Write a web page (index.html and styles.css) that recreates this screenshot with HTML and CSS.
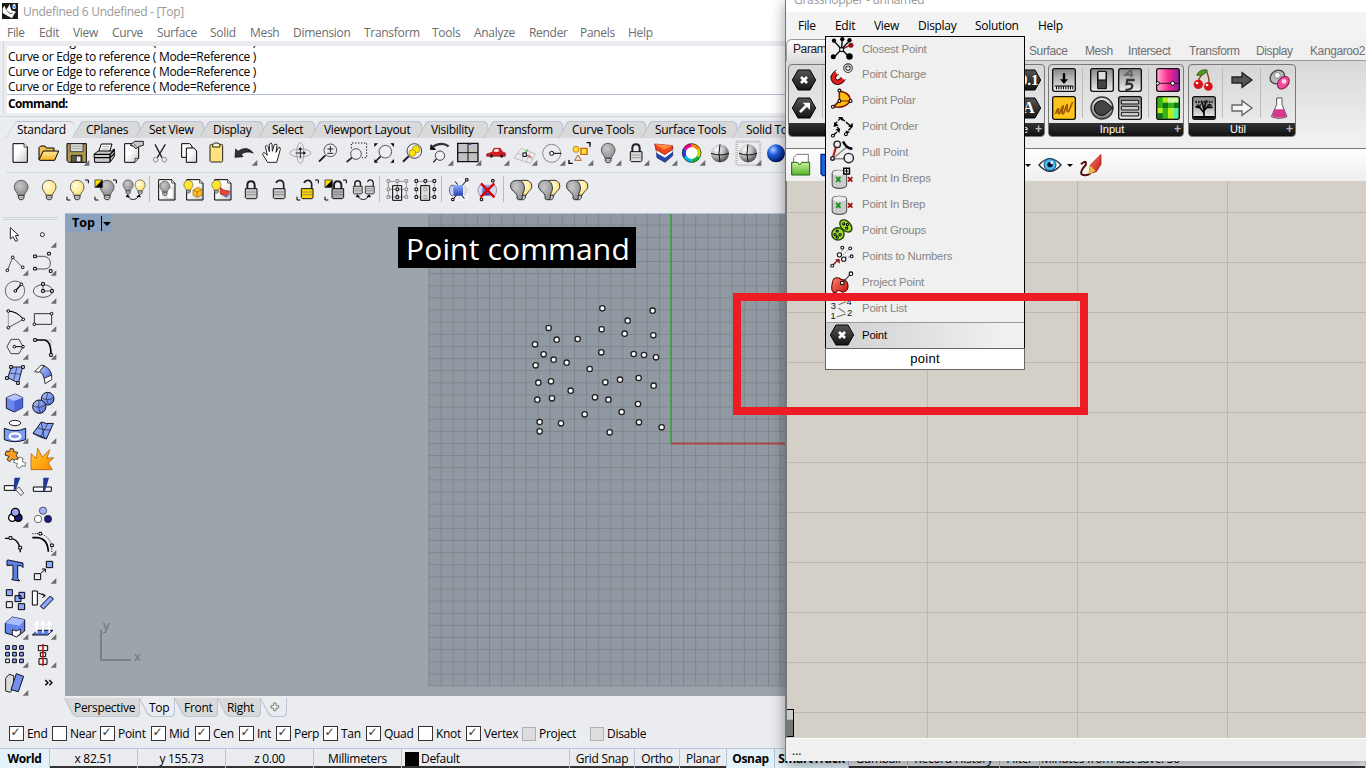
FILE: index.html
```html
<!DOCTYPE html>
<html lang="en">
<head>
<meta charset="utf-8">
<title>Undefined 6 Undefined - [Top]</title>
<link rel="stylesheet" href="styles.css">
</head>
<body>
<svg class="defs" width="0" height="0">
  <defs>
    <linearGradient id="gBlue" x1="0" y1="0" x2="1" y2="1"><stop offset="0" stop-color="#b3c6ff"/><stop offset="1" stop-color="#4a68dc"/></linearGradient>
    <linearGradient id="gCyl" x1="0" y1="0" x2="0" y2="1"><stop offset="0" stop-color="#8fb0ff"/><stop offset="1" stop-color="#2440b0"/></linearGradient>
    <linearGradient id="gGray" x1="0" y1="0" x2="0" y2="1"><stop offset="0" stop-color="#e4e4e4"/><stop offset="1" stop-color="#777"/></linearGradient>
    <linearGradient id="gBtn" x1="0" y1="0" x2="0" y2="1"><stop offset="0" stop-color="#888"/><stop offset="1" stop-color="#eee"/></linearGradient>
    <linearGradient id="gPage" x1="0" y1="0" x2="1" y2="1"><stop offset=".4" stop-color="#fff"/><stop offset="1" stop-color="#c8c8c8"/></linearGradient>
    <linearGradient id="gFold" x1="0" y1="0" x2="0" y2="1"><stop offset="0" stop-color="#ffe9a0"/><stop offset="1" stop-color="#f5b223"/></linearGradient>
    <linearGradient id="gBurst" x1="0" y1="0" x2="1" y2="1"><stop offset="0" stop-color="#ffcc30"/><stop offset="1" stop-color="#ff8a00"/></linearGradient>
    <linearGradient id="gPink" x1="0" y1="0" x2="1" y2="0"><stop offset="0" stop-color="#ffb0d0"/><stop offset=".5" stop-color="#ff2a90"/><stop offset="1" stop-color="#8a1ea0"/></linearGradient>
    <linearGradient id="gHex" x1="0" y1="0" x2="0" y2="1"><stop offset="0" stop-color="#555"/><stop offset="1" stop-color="#151515"/></linearGradient>
    <radialGradient id="gBall" cx=".35" cy=".3" r=".75"><stop offset="0" stop-color="#fff"/><stop offset=".5" stop-color="#bbb"/><stop offset="1" stop-color="#444"/></radialGradient>
    <radialGradient id="gBallB" cx=".35" cy=".3" r=".75"><stop offset="0" stop-color="#b8d4ff"/><stop offset=".4" stop-color="#1c5fe0"/><stop offset="1" stop-color="#001050"/></radialGradient>
    <radialGradient id="gY" cx=".35" cy=".35" r=".7"><stop offset="0" stop-color="#fffde0"/><stop offset="1" stop-color="#ffdf70"/></radialGradient>
    <radialGradient id="gG" cx=".4" cy=".35" r=".7"><stop offset="0" stop-color="#c8c8c8"/><stop offset="1" stop-color="#8c8c8c"/></radialGradient>
    <linearGradient id="gRed" x1="0" y1="0" x2="1" y2="1"><stop offset="0" stop-color="#ff8a70"/><stop offset="1" stop-color="#c01010"/></linearGradient>
    <linearGradient id="gGreen" x1="0" y1="0" x2="0" y2="1"><stop offset="0" stop-color="#c8f09a"/><stop offset="1" stop-color="#58b428"/></linearGradient>
    <pattern id="grid" width="12.13" height="12.13" patternUnits="userSpaceOnUse"><path d="M0 .5H12.13M.5 0V12.13" stroke="#7e858d" fill="none"/></pattern>
  </defs>
  <symbol id="tri" viewBox="0 0 84 84"><path d="M82 63V80H65Z" fill="#6e6e6e"/></symbol>
  <symbol id="bulb" viewBox="0 0 84 84"><path d="M42 13C30 13 22 22 22 34C22 45 31 48 33 58H52C54 48 63 45 63 34C63 22 54 13 42 13Z" stroke="#444" stroke-width="2.5"/><path d="M34 58H51V66L47 71H38L34 66Z" fill="#ccc" stroke="#333" stroke-width="3"/><path d="M34 64H51" stroke="#777" stroke-width="2"/></symbol>
  <symbol id="brk" viewBox="0 0 84 84"><path d="M66 12H76V22M12 62V72H22" fill="none" stroke="#000" stroke-width="3"/></symbol>
  <symbol id="sq" viewBox="0 0 84 84"><path d="M11 11H35V35H11Z" fill="#000"/><path d="M13 13H33L13 33Z" fill="#ffe000"/></symbol>
  <symbol id="lock" viewBox="0 0 84 84"><path d="M31 40V28Q31 16 42 16Q53 16 53 28V40" fill="none" stroke="#222" stroke-width="6"/><path d="M25 38H60V65L56 68H28L25 65Z" stroke="#111" stroke-width="3"/><path d="M28 48H57M28 56H57" stroke="#777" stroke-width="2"/></symbol>
  <symbol id="ulock" viewBox="0 0 84 84"><path d="M56 40V24Q54 13 45 13Q37 13 33 21" fill="none" stroke="#222" stroke-width="5"/><path d="M25 38H60V65L56 68H28L25 65Z" stroke="#111" stroke-width="3"/><path d="M28 48H57M28 56H57" stroke="#666" stroke-width="2"/></symbol>
  <symbol id="page" viewBox="0 0 84 84"><path d="M17 11H56L66 21V72H17Z" fill="url(#gPage)" stroke="#000" stroke-width="3"/><path d="M56 11V21H66" fill="#fff" stroke="#000" stroke-width="2"/></symbol>
  <symbol id="duo" viewBox="0 0 84 84"><path d="M42 13H60C72 16 75 24 74 34C72 45 60 48 57 58H45Z" fill="url(#gY)" stroke="#333" stroke-width="3"/><path d="M42 58H55V66L50 71H40Z" fill="#ccc" stroke="#333" stroke-width="3"/><path d="M31 13C15 13 9 22 11 34C13 45 27 48 30 58V68L34 71H43L46 66V58C48 48 54 44 52 32C50 20 44 13 31 13Z" fill="url(#gG)" stroke="#333" stroke-width="3"/></symbol>
  <symbol id="hex" viewBox="0 0 72 72"><path d="M18 6H54L71 36L54 66H18L1 36Z" fill="url(#gHex)" stroke="#000" stroke-width="3"/></symbol>
  <symbol id="btn" viewBox="0 0 72 72"><rect x="2" y="2" width="68" height="68" rx="6" fill="url(#gBtn)" stroke="#111" stroke-width="4"/></symbol>
  <symbol id="brep" viewBox="0 0 72 72"><path d="M6 20V52Q6 62 26 62Q46 62 46 52V20Q46 12 26 12Q6 12 6 20Z" fill="#ccc" stroke="#555" stroke-width="3"/><ellipse cx="26" cy="19" rx="19" ry="7" fill="#eee"/><path d="M17 30L29 44M29 30L17 44" stroke="#0a9a1a" stroke-width="5"/><path d="M50 31L62 43M62 31L50 43" stroke="#a01010" stroke-width="5"/></symbol>
</svg>

<main class="desktop">
<section class="rhino">
  <header class="titlebar">
    <svg class="app-icon" viewBox="0 0 48 48"><path d="M0 0H48V48H0Z" fill="#1a1a1a"/><path d="M2 16L8 8L12 20L20 10L22 2L28 22L42 26L36 34L30 46L12 36L2 30Z" fill="#fff"/><path d="M14 22L24 32L32 30" fill="none" stroke="#555" stroke-width="3"/><text x="31" y="17" font-size="19" font-weight="bold" fill="#fff">6</text></svg>
    <span>Undefined 6 Undefined - [Top]</span>
  </header>
  <nav class="menubar"><span>File</span><span>Edit</span><span>View</span><span>Curve</span><span>Surface</span><span>Solid</span><span>Mesh</span><span>Dimension</span><span>Transform</span><span>Tools</span><span>Analyze</span><span>Render</span><span>Panels</span><span>Help</span></nav>
  <div class="command">
    <div class="history"><p>Curve or Edge to reference ( Mode=Reference )</p><p>Curve or Edge to reference ( Mode=Reference )</p><p>Curve or Edge to reference ( Mode=Reference )</p><p>Curve or Edge to reference ( Mode=Reference )</p></div>
    <div class="prompt">Command:</div>
  </div>
  <div class="toolbars">
    <div class="tabs"><span class="tab on">Standard</span><span class="tab">CPlanes</span><span class="tab">Set View</span><span class="tab">Display</span><span class="tab">Select</span><span class="tab">Viewport Layout</span><span class="tab">Visibility</span><span class="tab">Transform</span><span class="tab">Curve Tools</span><span class="tab">Surface Tools</span><span class="tab">Solid Tools</span></div>
    <div class="icons">
      <svg viewBox="0 0 84 84"><path d="M21 14H54L64 24V70H21Z" fill="url(#gPage)" stroke="#000" stroke-width="3"/><path d="M54 14V24H64" fill="#fff" stroke="#000" stroke-width="2"/></svg>
      <svg viewBox="0 0 84 84"><path d="M15 62V26L20 21H33L37 27H60V36" fill="#f0c050" stroke="#000" stroke-width="3"/><path d="M15 62L28 36H74L62 64H18Z" fill="url(#gFold)" stroke="#000" stroke-width="3"/></svg>
      <svg viewBox="0 0 84 84"><path d="M15 14H73V70H20L15 65Z" fill="#b09a50" stroke="#000" stroke-width="3"/><path d="M25 14H63V38H25Z" fill="#ddd" stroke="#000" stroke-width="2"/><path d="M29 22H59M29 29H59" stroke="#888" stroke-width="2"/><path d="M28 49H60V70H28Z" fill="#555" stroke="#000" stroke-width="2"/><path d="M45 53H55V67H45Z" fill="#eee"/><use href="#tri"/></svg>
      <svg viewBox="0 0 84 84"><path d="M25 40L34 15H66L58 40Z" fill="#fff" stroke="#000" stroke-width="3"/><path d="M37 23H57M35 30H55" stroke="#777" stroke-width="2"/><path d="M12 46L24 36H64L73 30V52L60 70H14Z" fill="#ccc" stroke="#000" stroke-width="3"/><path d="M12 46H60L73 34M14 56H60L73 44M60 46V69" fill="none" stroke="#000" stroke-width="4"/></svg>
      <svg viewBox="0 0 84 84"><path d="M20 14H62V58L51 70H20Z" fill="url(#gPage)" stroke="#000" stroke-width="3"/><path d="M62 58H51V70" fill="#ccc" stroke="#000" stroke-width="2"/><path d="M36 19L50 7H76V19L64 22L54 29L46 22Z" fill="#ccc" stroke="#222" stroke-width="3"/><path d="M42 18L50 26M48 14L56 23" stroke="#333" stroke-width="2"/></svg>
      <svg viewBox="0 0 84 84"><path d="M27 16L48 56M58 16L34 56" stroke="#222" stroke-width="4"/><circle cx="29" cy="62" r="7" fill="none" stroke="#888" stroke-width="3"/><circle cx="55" cy="62" r="7" fill="none" stroke="#888" stroke-width="3"/></svg>
      <svg viewBox="0 0 84 84"><path d="M23 14H47L54 21V55H23Z" fill="#fff" stroke="#000" stroke-width="3"/><path d="M37 27H60L68 36V70H37Z" fill="url(#gPage)" stroke="#000" stroke-width="3"/></svg>
      <svg viewBox="0 0 84 84"><rect x="24" y="16" width="38" height="53" rx="4" fill="#ffe27c" stroke="#222" stroke-width="3"/><path d="M32 24V17L38 12H48L54 17V24Z" fill="#f5f5c0" stroke="#222" stroke-width="3"/></svg>
      <svg viewBox="0 0 84 84"><path d="M15 55L17 30L24 37Q50 18 70 42Q48 34 34 46L39 53Z" fill="#333" stroke="#000" stroke-width="2"/><use href="#tri"/></svg>
      <svg viewBox="0 0 84 84"><path d="M29 70L14 46Q14 38 22 43L28 49L22 22Q26 15 30 23L34 38V15Q39 8 42 15L43 37L49 17Q55 12 57 19L54 40L61 26Q68 23 67 31L56 70Z" fill="#fff" stroke="#222" stroke-width="3"/></svg>
      <svg viewBox="0 0 84 84"><g fill="none" stroke="#888" stroke-width="2"><ellipse cx="43" cy="42" rx="32" ry="12"/><ellipse cx="43" cy="42" rx="11" ry="31"/></g><path d="M43 30V58M29 42H56" stroke="#222" stroke-width="3"/><path d="M37 32L43 24L49 32M52 36L60 42L52 48" fill="#111"/></svg>
      <svg viewBox="0 0 84 84"><circle cx="49" cy="34" r="19" fill="#ededf2" stroke="#555" stroke-width="3"/><path d="M34 49L15 68" stroke="#222" stroke-width="6"/><path d="M40 30H58M49 21V40M40 43H58" stroke="#222" stroke-width="3"/></svg>
      <svg viewBox="0 0 84 84"><path d="M28 28V12H74V56H60" fill="none" stroke="#111" stroke-width="3" stroke-dasharray="4 5"/><circle cx="42" cy="45" r="16" fill="#ededf2" stroke="#555" stroke-width="3"/><path d="M30 56L14 69" stroke="#222" stroke-width="5"/></svg>
      <svg viewBox="0 0 84 84"><circle cx="46" cy="38" r="19" fill="#ededf2" stroke="#555" stroke-width="3"/><path d="M32 52L18 66" stroke="#222" stroke-width="5"/><path d="M13 13H24L13 24ZM61 13H72V24ZM13 60V71H24ZM72 60V71H61Z" fill="#000"/></svg>
      <svg viewBox="0 0 84 84"><circle cx="49" cy="36" r="22" fill="#ededf2" stroke="#444" stroke-width="3"/><path d="M32 52L15 68" stroke="#222" stroke-width="6"/><circle cx="54" cy="31" r="11" fill="#ffe400" stroke="#a08000" stroke-width="2"/><circle cx="43" cy="42" r="10" fill="#ffe400" stroke="#a08000" stroke-width="2"/></svg>
      <svg viewBox="0 0 84 84"><path d="M12 32L14 15L31 33Z" fill="#000"/><path d="M18 24Q48 6 68 22" fill="none" stroke="#333" stroke-width="7"/><circle cx="42" cy="50" r="14" fill="#ededf2" stroke="#444" stroke-width="3"/><path d="M31 60L22 70" stroke="#222" stroke-width="4"/><use href="#tri"/></svg>
      <svg viewBox="0 0 84 84"><path d="M11 13H72V68H11Z" fill="#c2c2c2" stroke="#111" stroke-width="4"/><path d="M11 41H72M42 13V68" stroke="#111" stroke-width="3"/><path d="M44 16H52" stroke="#3548b0" stroke-width="4"/><use href="#tri"/></svg>
      <svg viewBox="0 0 84 84"><path d="M14 45L30 40L36 28H55L61 38L70 42V52H14Z" fill="#d41c20" stroke="#a01414" stroke-width="2"/><path d="M38 31H50V38H35Z" fill="#fff"/><circle cx="28" cy="51" r="5" fill="#222"/><circle cx="59" cy="51" r="5" fill="#222"/><use href="#tri"/></svg>
      <svg viewBox="0 0 84 84"><path d="M12 57L34 28L76 44L62 73ZM22 43L69 60M48 33L34 67M62 39L48 71" fill="none" stroke="#aaa" stroke-width="2"/><path d="M45 46L65 55" stroke="#d22" stroke-width="3"/><path d="M45 46L53 32" stroke="#1a1" stroke-width="3"/><rect x="39" y="42" width="10" height="10" fill="#fff" stroke="#000" stroke-width="3"/><use href="#tri"/></svg>
      <svg viewBox="0 0 84 84"><circle cx="41" cy="43" r="27" fill="none" stroke="#888" stroke-width="3"/><path d="M41 43H70" stroke="#000" stroke-width="3"/><circle cx="41" cy="43" r="6" fill="#fff" stroke="#000" stroke-width="3"/><use href="#tri"/></svg>
      <svg viewBox="0 0 84 84"><circle cx="30" cy="31" r="9" fill="#ffe23c" stroke="#d08000" stroke-width="3"/><path d="M45 28H63V46H45Z" fill="#ffe23c" stroke="#d06000" stroke-width="4"/><path d="M36 48L46 64H26Z" fill="none" stroke="#b06020" stroke-width="3"/><path d="M62 11H72V23M9 63V73H20" stroke="#000" stroke-width="4" fill="none"/><use href="#tri"/></svg>
      <svg viewBox="0 0 84 84"><use href="#bulb" fill="url(#gG)"/><use href="#tri"/></svg>
      <svg viewBox="0 0 84 84"><use href="#lock" fill="#ddd"/><use href="#tri"/></svg>
      <svg viewBox="0 0 84 84"><path d="M18 26L43 40L68 24V50L45 70L21 56Z" fill="#2348b0" stroke="#114" stroke-width="2"/><path d="M18 26L43 42L68 26V38L45 56L20 42Z" fill="#fff"/><path d="M14 15L68 20L67 32L44 47L18 32Z" fill="#f0441c" stroke="#811" stroke-width="2"/><path d="M14 15L68 20L42 32Z" fill="#ff8c40"/><use href="#tri"/></svg>
      <svg viewBox="0 0 84 84"><g fill="none" stroke-width="11"><path d="M41 19A23 23 0 0 1 61 30" stroke="#f80"/><path d="M61 30A23 23 0 0 1 61 53" stroke="#cd0"/><path d="M61 53A23 23 0 0 1 41 65" stroke="#1b3"/><path d="M41 65A23 23 0 0 1 21 53" stroke="#0bd"/><path d="M21 53A23 23 0 0 1 21 30" stroke="#33e"/><path d="M21 30A23 23 0 0 1 41 19" stroke="#e09"/></g><circle cx="41" cy="42" r="28" fill="none" stroke="#222" stroke-width="2"/><circle cx="41" cy="42" r="17" fill="#fff"/><use href="#tri"/></svg>
      <svg viewBox="0 0 84 84"><circle cx="42" cy="43" r="27" fill="url(#gBall)"/><path d="M15 43Q42 53 69 43M42 16Q36 43 42 70" fill="none" stroke="#111" stroke-width="3"/></svg>
      <svg viewBox="0 0 84 84"><path d="M8 8H78V78H8Z" fill="none" stroke="#bbb" stroke-width="8" stroke-dasharray="3 3"/><circle cx="42" cy="43" r="27" fill="url(#gBall)"/><path d="M15 43Q42 53 69 43M42 16Q36 43 42 70" fill="none" stroke="#111" stroke-width="3"/><use href="#tri"/></svg>
      <svg viewBox="0 0 84 84"><circle cx="42" cy="43" r="27" fill="url(#gBallB)"/></svg>
    </div>
    <div class="icons second">
      <svg viewBox="0 0 84 84"><use href="#bulb" fill="url(#gG)"/></svg>
      <svg viewBox="0 0 84 84"><use href="#bulb" fill="url(#gY)"/></svg>
      <svg viewBox="0 0 84 84"><use href="#bulb" fill="url(#gY)"/><use href="#brk"/></svg>
      <svg viewBox="0 0 84 84"><use href="#bulb" x="6" width="84" height="84" fill="url(#gG)"/><use href="#sq"/><use href="#brk"/></svg>
      <svg viewBox="0 0 84 84"><use href="#bulb" x="-4" y="2" width="62" height="62" fill="url(#gG)"/><use href="#bulb" x="32" y="2" width="62" height="62" fill="url(#gY)"/><path d="M25 60Q43 82 60 60" fill="none" stroke="#222" stroke-width="3"/><path d="M20 64L25 55L33 63ZM52 63L61 55L66 64Z" fill="#000"/></svg>
      <i></i>
      <svg viewBox="0 0 84 84"><use href="#page"/><path d="M42 36H60V68H42Z" fill="#fff" stroke="#bbb" stroke-width="2"/><use href="#bulb" x="4" y="6" width="62" height="62" fill="url(#gG)"/></svg>
      <svg viewBox="0 0 84 84"><use href="#page"/><path d="M36 42L50 34L63 41V57L48 64L36 57Z" fill="#ffc020" stroke="#a06000" stroke-width="2"/><path d="M36 42L48 48L63 41M48 48V64" fill="none" stroke="#a06000" stroke-width="2"/><use href="#bulb" x="-6" y="4" width="56" height="56" fill="#ffe430"/></svg>
      <svg viewBox="0 0 84 84"><use href="#page"/><path d="M34 34L44 42L62 46L54 60L34 54Z" fill="#f0442c" stroke="#811" stroke-width="2"/><path d="M36 56L52 60L62 47V56L52 65Z" fill="#6880d0"/><use href="#bulb" x="-6" y="4" width="56" height="56" fill="#ffe430"/></svg>
      <svg viewBox="0 0 84 84"><use href="#lock" fill="#ccc"/></svg>
      <svg viewBox="0 0 84 84"><use href="#ulock" fill="#ccc"/></svg>
      <svg viewBox="0 0 84 84"><use href="#ulock" fill="#ffd500"/><use href="#brk"/></svg>
      <svg viewBox="0 0 84 84"><use href="#lock" x="8" width="84" height="84" fill="#aaa"/><use href="#sq"/><use href="#brk"/></svg>
      <svg viewBox="0 0 84 84"><use href="#lock" x="-6" y="2" width="64" height="64" fill="#ccc"/><use href="#ulock" x="30" y="2" width="64" height="64" fill="#ccc"/><path d="M25 60Q43 82 60 60" fill="none" stroke="#222" stroke-width="3"/><path d="M20 64L25 55L33 63ZM52 63L61 55L66 64Z" fill="#000"/></svg>
      <i></i>
      <svg viewBox="0 0 84 84"><path d="M16 16H70V63H16ZM43 16V63M16 40H70" fill="none" stroke="#999" stroke-width="3"/><g fill="#eee" stroke="#888" stroke-width="3"><path d="M12 11H20V19H12ZM39 11H47V19H39ZM66 11H74V19H66ZM12 36H20V44H12ZM66 36H74V44H66ZM12 59H20V67H12ZM66 59H74V67H66Z"/></g><path d="M29 29H56V73H29Z" fill="none" stroke="#000" stroke-width="3"/><path d="M39 36H47V44H39ZM39 59H47V67H39Z" fill="#fff" stroke="#000" stroke-width="3"/></svg>
      <svg viewBox="0 0 84 84"><path d="M16 16H70V63H16ZM43 16V63" fill="none" stroke="#999" stroke-width="3"/><path d="M29 29H56V73H29Z" fill="#ddd" stroke="#000" stroke-width="3"/><path d="M39 36H47V44H39ZM39 59H47V67H39Z" fill="#fff" stroke="#999" stroke-width="3"/><path d="M12 11H20V19H12ZM39 11H47V19H39ZM66 11H74V19H66ZM12 36H20V44H12ZM66 36H74V44H66ZM12 59H20V67H12ZM66 59H74V67H66Z" fill="#fff" stroke="#000" stroke-width="3"/></svg>
      <i></i>
      <svg viewBox="0 0 84 84"><path d="M36 12H66V72H26" fill="none" stroke="#fff" stroke-width="3"/><path d="M58 28Q76 42 58 58" fill="#ddd" stroke="#bbb" stroke-width="2"/><path d="M18 28Q8 42 18 58H28V28Z" fill="#c4d0f8" stroke="#335" stroke-width="2"/><path d="M28 27H54V59H28Q22 42 28 27Z" fill="url(#gCyl)"/><path d="M24 70L34 58M52 28L66 12M30 16L38 26M52 60L58 68" stroke="#000" stroke-width="3"/><path d="M20 67H27V74H20ZM62 8H69V15H62Z" fill="#fff" stroke="#000" stroke-width="3"/></svg>
      <svg viewBox="0 0 84 84"><path d="M20 28Q10 42 20 58H66Q76 42 66 28Z" fill="#d4dcf4" stroke="#778" stroke-width="2"/><path d="M28 28H50V58H28Z" fill="url(#gCyl)"/><path d="M56 11H63V18H56ZM22 67H29V74H22Z" fill="#fff" stroke="#000" stroke-width="3"/><path d="M24 22L64 64M64 22L22 64" stroke="#e40000" stroke-width="7"/></svg>
      <i></i>
      <svg viewBox="0 0 84 84"><use href="#duo"/></svg><svg viewBox="0 0 84 84"><use href="#duo"/></svg><svg viewBox="0 0 84 84"><use href="#duo"/></svg>
    </div>
  </div>
  <div class="work">
    <aside class="palette">
      <svg viewBox="0 0 84 84"><path d="M28 20V54L36 47L44 61L50 58L43 44L53 43Z" fill="#fff" stroke="#222" stroke-width="3"/></svg>
      <svg viewBox="0 0 84 84"><circle cx="40" cy="41" r="6" fill="#fff" stroke="#222" stroke-width="3"/><use href="#tri"/></svg>
      <svg viewBox="0 0 84 84"><path d="M19 65L35 25L65 55" fill="none" stroke="#555" stroke-width="3"/><g fill="#fff" stroke="#000" stroke-width="3"><circle cx="19" cy="64" r="4"/><circle cx="35" cy="25" r="4"/><circle cx="65" cy="55" r="4"/></g><use href="#tri"/></svg>
      <svg viewBox="0 0 84 84"><path d="M18 22H46Q64 26 64 42Q64 60 46 60H18" fill="none" stroke="#555" stroke-width="3"/><path d="M14 18H22V26H14ZM56 10H64V18H56ZM14 55H22V63H14ZM61 62H69V70H61Z" fill="#fff" stroke="#000" stroke-width="3"/><use href="#tri"/></svg>
      <svg viewBox="0 0 84 84"><circle cx="42" cy="41" r="29" fill="none" stroke="#666" stroke-width="3"/><path d="M43 42L61 22" stroke="#000" stroke-width="4"/><g fill="#fff" stroke="#000" stroke-width="3"><circle cx="43" cy="42" r="4"/><circle cx="61" cy="22" r="4"/></g><use href="#tri"/></svg>
      <svg viewBox="0 0 84 84"><ellipse cx="42" cy="42" rx="29" ry="19" fill="none" stroke="#555" stroke-width="3"/><path d="M42 21V42H69" fill="none" stroke="#555" stroke-width="3"/><path d="M38 17H46V25H38ZM38 38H46V46H38ZM65 38H73V46H65Z" fill="#fff" stroke="#000" stroke-width="3"/><use href="#tri"/></svg>
      <svg viewBox="0 0 84 84"><path d="M22 68V18" stroke="#999" stroke-width="3"/><path d="M22 18Q50 20 67 43L22 68" fill="none" stroke="#555" stroke-width="3"/><path d="M22 18Q50 20 67 43" fill="none" stroke="#000" stroke-width="3"/><g fill="#fff" stroke="#000" stroke-width="3"><circle cx="22" cy="18" r="4"/><circle cx="22" cy="68" r="4"/><circle cx="67" cy="43" r="4"/></g><use href="#tri"/></svg>
      <svg viewBox="0 0 84 84"><path d="M16 26H68V58H16Z" fill="none" stroke="#333" stroke-width="3"/><g fill="#fff" stroke="#000" stroke-width="3"><circle cx="16" cy="58" r="4"/><circle cx="68" cy="26" r="4"/></g><use href="#tri"/></svg>
      <svg viewBox="0 0 84 84"><path d="M30 19H54L66 41L54 62H30L18 41Z" fill="none" stroke="#444" stroke-width="3"/><path d="M40 41H66" stroke="#000" stroke-width="3"/><g fill="#fff" stroke="#000" stroke-width="3"><circle cx="40" cy="41" r="4"/><circle cx="66" cy="41" r="4"/></g><use href="#tri"/></svg>
      <svg viewBox="0 0 84 84"><path d="M50 21H66V36" fill="none" stroke="#999" stroke-width="2"/><path d="M18 21H44Q66 21 66 66" fill="none" stroke="#000" stroke-width="5"/><path d="M14 17H22V25H14ZM62 62H70V70H62Z" fill="#fff" stroke="#000" stroke-width="3"/><use href="#tri"/></svg>
      <svg viewBox="0 0 84 84"><path d="M31 18L65 18L52 66L20 50Z" fill="#93abf8" stroke="#223" stroke-width="3"/><path d="M48 18L38 58M24 36L60 40" stroke="#223" stroke-width="2"/><path d="M26 14H34V22H26ZM62 14H70V22H62ZM14 47H22V55H14ZM47 62H55V70H47Z" fill="#fff" stroke="#000" stroke-width="3"/><use href="#tri"/></svg>
      <svg viewBox="0 0 84 84"><path d="M40 14Q64 18 68 44L46 54Q44 36 30 30Z" fill="url(#gBlue)" stroke="#223" stroke-width="3"/><path d="M17 32L36 13H46L30 34Z" fill="#fff" stroke="#333" stroke-width="3"/><path d="M46 52L68 42V56L48 68Z" fill="#fff" stroke="#333" stroke-width="3"/><use href="#tri"/></svg>
      <svg viewBox="0 0 84 84"><path d="M16 26L42 15L65 26V56L40 69L16 58Z" fill="#6a88ee" stroke="#112" stroke-width="3"/><path d="M16 26L42 15L65 26L40 36Z" fill="#b4c4ff"/><path d="M40 36L65 26V56L40 69Z" fill="#4a64d8"/><use href="#tri"/></svg>
      <svg viewBox="0 0 84 84"><circle cx="56" cy="29" r="19" fill="url(#gBlue)" stroke="#111" stroke-width="3"/><circle cx="31" cy="53" r="20" fill="url(#gBlue)" stroke="#111" stroke-width="3"/><path d="M12 50Q28 60 50 48M31 33Q24 52 34 72M38 26Q56 38 74 26M56 10Q48 28 58 47" fill="none" stroke="#223" stroke-width="2"/><use href="#tri"/></svg>
      <svg viewBox="0 0 84 84"><ellipse cx="42" cy="18" rx="17" ry="8" fill="#fff" stroke="#222" stroke-width="3"/><path d="M10 34Q42 48 74 34V68Q42 80 10 68Z" fill="#7c9cf4" stroke="#112" stroke-width="3"/><ellipse cx="42" cy="58" rx="16" ry="9" fill="none" stroke="#fff" stroke-width="7"/><use href="#tri"/></svg>
      <svg viewBox="0 0 84 84"><path d="M12 49L37 15Q50 22 73 19L52 66Q30 60 12 49Z" fill="#8aa4f6" stroke="#112" stroke-width="3"/><path d="M25 32Q42 40 64 39M35 60L56 20M14 49L50 63M37 16L45 60" fill="none" stroke="#112" stroke-width="2"/><use href="#tri"/></svg>
      <svg viewBox="0 0 84 84"><path d="M16 18L26 20L28 10L38 12L38 20L50 22L46 32L52 40L42 46L34 42L26 50L18 44L24 34L12 30Z" fill="#f79d20" stroke="#333" stroke-width="3"/><path d="M42 42L50 44L56 36L66 40L64 50L74 54L72 64L62 62L56 70L46 64L50 56L38 52Z" fill="#fff" stroke="#333" stroke-width="2"/></svg>
      <svg viewBox="0 0 84 84"><path d="M6 74V26L22 40L26 10L40 36L62 14L54 40L74 38L58 54L70 74Z" fill="url(#gBurst)" stroke="#a04c00" stroke-width="2"/></svg>
      <svg viewBox="0 0 84 84"><path d="M10 38H44V52H10Z" fill="#fff" stroke="#000" stroke-width="3"/><path d="M40 14H58L44 50H38Z" fill="#1d3b94"/><path d="M44 50L54 42L68 60L60 68Z" fill="#eee" stroke="#555" stroke-width="3"/></svg>
      <svg viewBox="0 0 84 84"><path d="M13 42H67V55H13Z" fill="#fff" stroke="#000" stroke-width="3"/><path d="M43 14H60L48 54H42Z" fill="#1d3b94"/></svg>
      <svg viewBox="0 0 84 84"><g stroke="#000" stroke-width="4"><circle cx="34" cy="50" r="11" fill="#fff"/><circle cx="52" cy="50" r="11" fill="#191970"/><circle cx="43" cy="34" r="12" fill="#9aa4f4"/></g><use href="#tri"/></svg>
      <svg viewBox="0 0 84 84"><g stroke="#222" stroke-width="2"><circle cx="42" cy="29" r="11" fill="#a4b0fa"/><circle cx="27" cy="54" r="11" fill="#fff"/><circle cx="57" cy="54" r="11" fill="#191980"/></g></svg>
      <svg viewBox="0 0 84 84"><path d="M12 28H28Q56 30 58 70" fill="none" stroke="#000" stroke-width="4"/><path d="M24 23H33V31H24ZM53 52H62V60H53Z" fill="#fff" stroke="#000" stroke-width="3"/></svg>
      <svg viewBox="0 0 84 84"><path d="M10 14H32Q60 20 68 50V70" fill="none" stroke="#000" stroke-width="3" stroke-dasharray="3 4"/><path d="M10 26H24Q56 28 58 68" fill="none" stroke="#000" stroke-width="5"/><path d="M30 10H38V18H30ZM65 45H73V53H65Z" fill="#fff" stroke="#000" stroke-width="3"/><use href="#tri"/></svg>
      <svg viewBox="0 0 84 84"><path d="M18 10L22 9L66 18V32L60 26H50V64L56 72L32 68L36 62V24L18 26Z" fill="#5f80e6" stroke="#112" stroke-width="3"/></svg>
      <svg viewBox="0 0 84 84"><path d="M16 50H35V68H16Z" fill="#eee" stroke="#000" stroke-width="3"/><path d="M52 13H71V32H52Z" fill="#8fa8ff" stroke="#000" stroke-width="3"/><path d="M36 49L49 36M39 36H49V46" fill="none" stroke="#000" stroke-width="3"/><use href="#tri"/></svg>
      <svg viewBox="0 0 84 84"><g fill="#8fa8ff" stroke="#000" stroke-width="3"><path d="M16 14H34V32H16ZM54 22H71V40H54ZM42 32H60V50H42ZM52 56H71V74H52Z"/><path d="M16 50H34V68H16Z" fill="#eee"/></g></svg>
      <svg viewBox="0 0 84 84"><path d="M10 18H25V60H10Z" fill="#fff" stroke="#000" stroke-width="3"/><path d="M28 24L48 32M40 26L49 32L40 38" fill="none" stroke="#000" stroke-width="3"/><path d="M34 64L64 33L73 42L44 72Z" fill="#8fa8ff" stroke="#000" stroke-width="3"/></svg>
      <svg viewBox="0 0 84 84"><path d="M13 30L34 12L71 20V54L50 70L13 60Z" fill="#6484ee" stroke="#112" stroke-width="3"/><path d="M13 30L34 12L71 20L56 38Z" fill="#a9bcff"/><path d="M34 50L46 54L58 48V62L46 72L34 66Z" fill="#fff" stroke="#222" stroke-width="3"/><use href="#tri"/></svg>
      <svg viewBox="0 0 84 84"><path d="M10 66L26 52H72L56 66Z" fill="#5d81e8" stroke="#112" stroke-width="3"/><path d="M23 60V28M42 60V28M61 60V28" stroke="#fff" stroke-width="5"/><path d="M15 36L23 22L31 36ZM34 36L42 22L50 36ZM53 36L61 22L69 36Z" fill="#fff"/><use href="#tri"/></svg>
      <svg viewBox="0 0 84 84"><g fill="#8fa8ff" stroke="#000" stroke-width="3"><path d="M14 14H25V25H14ZM35 14H46V25H35ZM56 14H67V25H56ZM14 34H25V45H14ZM35 34H46V45H35ZM56 34H67V45H56ZM35 54H46V65H35ZM56 54H67V65H56Z"/><path d="M14 54H25V65H14Z" fill="#fff"/></g><use href="#tri"/></svg>
      <svg viewBox="0 0 84 84"><g fill="#eee" stroke="#000" stroke-width="3"><path d="M28 14H56V29H28ZM34 35H50V47H34ZM30 53H54V70H30Z"/></g><path d="M42 9V75" stroke="#d01818" stroke-width="5"/><use href="#tri"/></svg>
      <svg viewBox="0 0 84 84"><path d="M14 28L24 16L38 20V56L28 70L14 66Z" fill="#ddd" stroke="#222" stroke-width="3"/><path d="M46 14L68 22L52 68L30 62Z" fill="#7390ee" stroke="#111" stroke-width="3"/><use href="#tri"/></svg>
      <svg viewBox="0 0 84 84"><path d="M49 33L57 41L49 49M61 33L69 41L61 49" fill="none" stroke="#000" stroke-width="4"/></svg>
    </aside>
    <div class="viewport">
      <svg class="scene" viewBox="64 213 1302 483">
        <g transform="translate(428.4 200.4)"><path d="M0 0H700V486H0Z" fill="#919aa2"/><path d="M0 0H700V486H0Z" fill="url(#grid)"/></g>
        <path d="M671 213V443" stroke="#479b48" stroke-width="2"/><path d="M671 443.5H1366" stroke="#a8474b" stroke-width="2"/>
        <path d="M101 630V660H131" fill="none" stroke="#7b8085" stroke-width="2"/><text x="103" y="630" font-size="13" fill="#6c7176">y</text><text x="134" y="661" font-size="13" fill="#6c7176">x</text>
        <g class="pts" transform="translate(390 205) scale(.33333)"><circle cx="637" cy="310" r="8"/><circle cx="788" cy="317" r="8"/><circle cx="713" cy="347" r="8"/><circle cx="635" cy="373" r="8"/><circle cx="704" cy="386" r="8"/><circle cx="790" cy="391" r="8"/><circle cx="476" cy="369" r="8"/><circle cx="500" cy="404" r="8"/><circle cx="563" cy="402" r="8"/><circle cx="435" cy="418" r="8"/><circle cx="461" cy="448" r="8"/><circle cx="491" cy="464" r="8"/><circle cx="530" cy="473" r="8"/><circle cx="437" cy="481" r="8"/><circle cx="634" cy="442" r="8"/><circle cx="731" cy="447" r="8"/><circle cx="762" cy="450" r="8"/><circle cx="798" cy="457" r="8"/><circle cx="599" cy="492" r="8"/><circle cx="445" cy="533" r="8"/><circle cx="483" cy="529" r="8"/><circle cx="646" cy="532" r="8"/><circle cx="690" cy="524" r="8"/><circle cx="746" cy="519" r="8"/><circle cx="791" cy="542" r="8"/><circle cx="542" cy="557" r="8"/><circle cx="442" cy="584" r="8"/><circle cx="486" cy="580" r="8"/><circle cx="615" cy="577" r="8"/><circle cx="655" cy="584" r="8"/><circle cx="744" cy="597" r="8"/><circle cx="584" cy="628" r="8"/><circle cx="695" cy="621" r="8"/><circle cx="449" cy="651" r="8"/><circle cx="449" cy="679" r="8"/><circle cx="513" cy="655" r="8"/><circle cx="747" cy="652" r="8"/><circle cx="815" cy="667" r="8"/><circle cx="659" cy="682" r="8"/></g>
      </svg>
      <div class="vp-title"><b>Top</b><span></span></div>
    </div>
  </div>
  <div class="vp-tabs"><span class="vt">Perspective</span><span class="vt on">Top</span><span class="vt">Front</span><span class="vt">Right</span><span class="vt on"><svg viewBox="0 0 30 30"><path d="M11 3H18V11H26V18H18V26H11V18H3V11H11Z" fill="#fff" stroke="#777" stroke-width="3"/></svg></span></div>
  <div class="osnap"><label class="c">End</label><label>Near</label><label class="c">Point</label><label class="c">Mid</label><label class="c">Cen</label><label class="c">Int</label><label class="c">Perp</label><label class="c">Tan</label><label class="c">Quad</label><label>Knot</label><label class="c">Vertex</label><label class="d">Project</label><label class="d">Disable</label></div>
  <footer class="status"><span class="hot">World</span><span>x 82.51</span><span>y 155.73</span><span>z 0.00</span><span>Millimeters</span><span class="layer">Default</span><span>Grid Snap</span><span>Ortho</span><span>Planar</span><span class="hot">Osnap</span><span class="hot">SmartTrack</span><span>Gumball</span><span>Record History</span><span>Filter</span><span class="last">Minutes from last save: 30</span></footer>
</section>

<div class="caption">Point command</div>

<section class="gh">
  <header class="gh-title">Grasshopper - unnamed</header>
  <nav class="gh-menu"><span>File</span><span>Edit</span><span>View</span><span>Display</span><span>Solution</span><span>Help</span></nav>
  <div class="gh-tabs"><span class="on">Params</span><span></span><span>Surface</span><span>Mesh</span><span>Intersect</span><span>Transform</span><span>Display</span><span>Kangaroo2</span></div>
  <div class="ribbon">
    <div class="group wide">
      <div class="cells">
        <div class="col"><svg viewBox="0 0 72 72"><use href="#hex"/><path d="M27 27L45 45M45 27L27 45" stroke="#fff" stroke-width="8"/></svg><svg viewBox="0 0 72 72"><use href="#hex"/><path d="M24 48L42 30" stroke="#fff" stroke-width="8"/><path d="M32 20H54V42Z" fill="#fff"/></svg></div>
        <i></i>
        <div class="col end"><svg viewBox="0 0 72 72"><use href="#hex"/><text x="8" y="52" font-size="46" font-weight="bold" fill="#fff" class="serif">0.1</text></svg><svg viewBox="0 0 72 72"><use href="#hex"/><text x="18" y="52" font-size="48" font-weight="bold" fill="#fff" class="serif">A</text></svg></div>
      </div>
      <div class="cap">Primitive<b>+</b></div>
    </div>
    <div class="group">
      <div class="cells">
        <div class="col"><svg viewBox="0 0 72 72"><use href="#btn"/><path d="M36 16V38" stroke="#000" stroke-width="7"/><path d="M24 34H48L36 48Z"/><path d="M8 54H64" stroke="#000" stroke-width="3"/><path d="M12 59H64" stroke="#000" stroke-width="9" stroke-dasharray="3 4"/></svg><svg viewBox="0 0 72 72"><rect x="2" y="2" width="68" height="68" rx="6" fill="#ffc41c" stroke="#111" stroke-width="4"/><path d="M10 54Q18 34 20 40Q16 60 24 50Q34 22 34 32Q26 62 36 50Q46 18 46 28Q42 52 50 46L62 18" fill="none" stroke="#a05a00" stroke-width="5"/></svg></div>
        <i></i>
        <div class="col"><svg viewBox="0 0 72 72"><use href="#btn"/><path d="M23 12H49V62H23Z" fill="#444" stroke="#000" stroke-width="3"/><path d="M24 10H48V36H24Z" fill="#ddd" stroke="#000" stroke-width="3"/></svg><svg viewBox="0 0 72 72"><circle cx="36" cy="36" r="33" fill="url(#gGray)" stroke="#333" stroke-width="4"/><path d="M50 20A22 22 0 1 0 50 52L68 36Z" fill="#444" stroke="#000" stroke-width="3"/></svg></div>
        <div class="col pair"><svg viewBox="0 0 72 72"><use href="#btn"/><path d="M40 4L22 20H46M40 4V28" fill="none" stroke="#666" stroke-width="6"/><path d="M50 36H28L26 48Q46 44 42 58Q38 66 22 66" fill="none" stroke="#333" stroke-width="7"/></svg><svg viewBox="0 0 72 72"><use href="#btn"/><path d="M10 13H62V24H10ZM10 31H62V42H10ZM10 49H62V60H10Z" fill="#ccc" stroke="#111" stroke-width="3"/></svg></div>
        <i></i>
        <div class="col"><svg viewBox="0 0 72 72"><rect x="2" y="2" width="68" height="68" rx="6" fill="url(#gPink)" stroke="#111" stroke-width="4"/><path d="M4 46H68" stroke="#222" stroke-width="3"/><circle cx="5" cy="46" r="5" fill="#fff" stroke="#000" stroke-width="3"/><circle cx="50" cy="46" r="6" fill="#fff" stroke="#000" stroke-width="3"/></svg><svg viewBox="0 0 72 72"><rect x="2" y="2" width="68" height="68" rx="6" fill="#38b01c"/><path d="M20 4H36V20H20ZM4 36H20V52H4ZM36 36H54V68H36Z" fill="#b4ee20"/><path d="M36 4H68V20H36Z" fill="#d0f8a0"/><path d="M4 52H20V68H4ZM20 20H36V36H20ZM54 20H68V36H54Z" fill="#107810"/><path d="M54 36H68V68H54Z" fill="#50f0a0"/><rect x="2" y="2" width="68" height="68" rx="6" fill="none" stroke="#111" stroke-width="4"/></svg></div>
      </div>
      <div class="cap">Input<b>+</b></div>
    </div>
    <div class="group">
      <div class="cells">
        <div class="col"><svg viewBox="0 0 72 72"><path d="M18 44Q22 20 44 10Q52 30 52 50" fill="none" stroke="#8a4010" stroke-width="4"/><path d="M14 22Q22 2 46 6Q40 24 14 22Z" fill="#4c9c20" stroke="#205008" stroke-width="2"/><circle cx="19" cy="49" r="14" fill="#d81418"/><circle cx="49" cy="55" r="13" fill="#d81418"/><circle cx="15" cy="45" r="4" fill="#fff"/><circle cx="45" cy="51" r="4" fill="#fff"/></svg><svg viewBox="0 0 72 72"><use href="#btn"/><path d="M4 60H68V68H4Z"/><path d="M36 64V36M36 50L18 28M36 44L54 24M36 40L28 14M36 38L44 12M26 36L10 32M46 34L62 34" stroke="#000" stroke-width="5"/><path d="M10 18H62M14 28H60" stroke="#222" stroke-width="7" stroke-dasharray="5 3"/></svg></div>
        <i></i>
        <div class="col"><svg viewBox="0 0 72 72"><path d="M6 27H36V14L66 36L36 58V45H6Z" fill="#555" stroke="#222" stroke-width="4"/></svg><svg viewBox="0 0 72 72"><path d="M6 27H36V14L66 36L36 58V45H6Z" fill="#f4f4f4" stroke="#666" stroke-width="4"/></svg></div>
        <i></i>
        <div class="col"><svg viewBox="0 0 72 72"><ellipse cx="28" cy="27" rx="23" ry="19" transform="rotate(-40 28 27)" fill="#bbb" stroke="#444" stroke-width="4"/><circle cx="28" cy="22" r="9" fill="#f4f4f4" stroke="#666" stroke-width="2"/><ellipse cx="46" cy="44" rx="21" ry="15" transform="rotate(-50 46 44)" fill="#ec4e9c" stroke="#8a1450" stroke-width="3"/><circle cx="48" cy="40" r="7" fill="#fff" opacity=".8"/></svg><svg viewBox="0 0 72 72"><path d="M26 6H42V26L57 62Q34 72 10 62L26 26Z" fill="#fff" stroke="#555" stroke-width="3"/><path d="M20 40H47L56 61Q34 70 12 61Z" fill="#d83888"/></svg></div>
      </div>
      <div class="cap">Util<b>+</b></div>
    </div>
  </div>
  <div class="gh-tools">
    <svg class="file" viewBox="0 0 72 72"><path d="M14 32V14L24 4H58V40" fill="#fff" stroke="#777" stroke-width="3"/><path d="M8 66V28H26L32 36L38 28H62V66Z" fill="url(#gGreen)" stroke="#1c6410" stroke-width="3"/></svg>
    <svg class="save" viewBox="0 0 72 72"><path d="M3 4H66V68H9L3 62Z" fill="#1c64e0" stroke="#002880" stroke-width="4"/></svg>
    <u></u>
    <svg class="eye" viewBox="0 0 72 72"><path d="M3 36Q36 -2 69 36Q36 74 3 36Z" fill="#fff" stroke="#234" stroke-width="4"/><circle cx="36" cy="35" r="18" fill="#48b8ec" stroke="#124870" stroke-width="3"/><circle cx="36" cy="35" r="8" fill="#012"/><circle cx="41" cy="29" r="4" fill="#fff"/></svg>
    <u></u>
    <svg class="pen" viewBox="0 0 72 72"><path d="M6 34Q24 18 20 36Q2 56 8 64Q20 70 34 62" fill="none" stroke="#501010" stroke-width="6"/><path d="M34 36L66 4V34L52 56L30 62Z" fill="url(#gRed)" stroke="#a01010" stroke-width="2"/><path d="M34 38L50 54L28 64Z" fill="#e8c040"/></svg>
  </div>
  <div class="gh-canvas"><div class="wid"></div></div>
  <footer class="gh-status">...</footer>
</section>

<div class="popup">
  <div class="item"><svg viewBox="0 0 72 72"><path d="M32 34L11 11M32 34L34 5M32 34L54 10M32 34L10 57M32 34L56 58" stroke="#111" stroke-width="4"/><path d="M32 34L58 22" stroke="#901010" stroke-width="4"/><g><circle cx="11" cy="10" r="6"/><circle cx="34" cy="6" r="6"/><circle cx="54" cy="9" r="6"/><circle cx="9" cy="55" r="7"/><circle cx="54" cy="54" r="9"/></g><circle cx="58" cy="23" r="7" fill="#901010"/><rect x="27" y="30" width="10" height="10" fill="#fff" stroke="#000" stroke-width="3"/></svg>Closest Point</div>
  <div class="item"><svg viewBox="0 0 72 72"><g fill="none" stroke="#333" stroke-width="3"><circle cx="50" cy="17" r="12"/><circle cx="50" cy="17" r="6"/></g><path d="M21 28Q2 40 12 52Q24 64 38 44" fill="none" stroke="#300" stroke-width="15"/><path d="M21 28Q2 40 12 52Q24 64 38 44" fill="none" stroke="#e02020" stroke-width="10"/><path d="M17 24L24 33M32 39L43 47" stroke="#fff" stroke-width="7"/></svg>Point Charge</div>
  <div class="item"><svg viewBox="0 0 72 72"><path d="M26 8Q58 14 56 36Q42 58 10 52L26 36Z" fill="#ffbc14" stroke="#801800" stroke-width="4"/><path d="M26 8V36H56M26 36L8 52" fill="none" stroke="#801800" stroke-width="3"/><g fill="#fff" stroke="#000" stroke-width="3"><circle cx="26" cy="7" r="4"/><circle cx="26" cy="36" r="4"/><circle cx="57" cy="36" r="4"/><circle cx="8" cy="52" r="4"/></g></svg>Point Polar</div>
  <div class="item"><svg viewBox="0 0 72 72"><path d="M8 60L26 44L14 28L30 10M30 10L60 36L44 54" fill="none" stroke="#111" stroke-width="4" stroke-dasharray="15 4"/><path d="M26 53L28 40L15 42ZM10 36L12 22L24 32ZM22 8H35V20ZM50 36H63V24ZM43 46L55 50L46 56Z"/><g fill="#fff" stroke="#000" stroke-width="3"><circle cx="8" cy="60" r="4"/><circle cx="44" cy="56" r="4"/></g></svg>Point Order</div>
  <div class="item"><svg viewBox="0 0 72 72"><path d="M7 52L18 14" stroke="#c01818" stroke-width="6"/><path d="M7 52L46 20M7 52L40 52" stroke="#888" stroke-width="4"/><path d="M36 4Q46 24 62 24" fill="none" stroke="#000" stroke-width="7"/><g fill="#eee" stroke="#222" stroke-width="4"><circle cx="20" cy="12" r="9"/><circle cx="52" cy="50" r="13"/><circle cx="7" cy="51" r="5"/></g></svg>Pull Point</div>
  <div class="item"><svg viewBox="0 0 72 72"><use href="#brep"/><path d="M38 6H54V22H38Z" fill="#fff" stroke="#000" stroke-width="4"/><path d="M46 9V19M41 14H51" stroke="#000" stroke-width="3"/></svg>Point In Breps</div>
  <div class="item"><svg viewBox="0 0 72 72"><use href="#brep"/></svg>Point In Brep</div>
  <div class="item"><svg viewBox="0 0 72 72"><g fill="#a0dc28" stroke="#204808" stroke-width="4"><ellipse cx="44" cy="22" rx="20" ry="13" transform="rotate(45 44 22)"/><circle cx="22" cy="44" r="17"/></g><g fill="#fff" stroke="#000" stroke-width="3"><circle cx="38" cy="16" r="3"/><circle cx="48" cy="18" r="3"/><circle cx="46" cy="28" r="3"/><circle cx="20" cy="36" r="3"/><circle cx="14" cy="46" r="3"/><circle cx="28" cy="46" r="3"/><circle cx="20" cy="53" r="3"/></g></svg>Point Groups</div>
  <div class="item"><svg viewBox="0 0 72 72"><path d="M6 60L24 42" stroke="#901010" stroke-width="4"/><path d="M14 42H27V55Z" fill="#901010"/><path d="M30 28L36 12M36 30L56 12M42 36H58" stroke="#666" stroke-width="2" stroke-dasharray="5 3"/><g fill="#fff" stroke="#111" stroke-width="3"><circle cx="6" cy="60" r="4"/><circle cx="34" cy="10" r="4"/><circle cx="56" cy="12" r="4"/><circle cx="60" cy="34" r="4"/><circle cx="26" cy="30" r="6"/><circle cx="38" cy="42" r="6"/></g></svg>Points to Numbers</div>
  <div class="item"><svg viewBox="0 0 72 72"><path d="M6 38Q8 18 24 22Q32 28 42 28Q54 38 48 54Q38 66 28 58Q18 54 16 64Q0 62 6 38Z" fill="url(#gRed)" stroke="#600" stroke-width="3"/><path d="M58 10L36 34" stroke="#333" stroke-width="3"/><g fill="#fff" stroke="#000" stroke-width="3"><circle cx="58" cy="10" r="5"/><circle cx="34" cy="36" r="5"/></g></svg>Project Point</div>
  <div class="item"><svg viewBox="0 0 72 72"><g font-size="26" fill="#111"><text x="2" y="37">3</text><text x="46" y="26">4</text><text x="1" y="64">1</text><text x="47" y="56">2</text></g><path d="M24 24L44 16M24 34L42 46M18 58L44 50" stroke="#777" stroke-width="3"/></svg>Point List</div>
  <div class="item sel"><svg viewBox="0 0 72 72"><use href="#hex"/><path d="M27 27L45 45M45 27L27 45" stroke="#fff" stroke-width="8"/></svg>Point</div>
  <div class="query">point</div>
</div>
<div class="frame"></div>
</main>
</body>
</html>
```
FILE: styles.css
```css
* { box-sizing: border-box; }
body { margin: 0; font: 12px/15px "Open Sans", "Noto Sans", sans-serif; letter-spacing: -.3px; color: #000; }
p { margin: 0; }
svg { display: block; }
.defs { position: absolute; }
.desktop { position: relative; width: 1366px; height: 768px; overflow: hidden; background: #ebecf0; }
.rhino { display: flex; flex-direction: column; width: 1366px; height: 768px; border-bottom: 2px solid #333; }

.titlebar { display: flex; gap: 5px; height: 24px; padding: 3px 2px 0; background: #fff; color: #999; line-height: 18px; flex: none; }
.app-icon { width: 16px; height: 16px; }
.menubar { display: grid; grid-template-columns: 32px 34px 39px 45px 53px 40px 43px 71px 68px 42px 55px 51px 48px auto; height: 17px; padding-left: 7px; background: #fff; color: #6d6d6d; line-height: 18px; flex: none; }

.command { flex: none; height: 72px; padding: 5px 0 0 4px; border-left: 3px solid #ebecf0; box-shadow: inset 1px 0 #d4d7e0; margin-bottom: 3px; }
.history { display: flex; flex-direction: column; justify-content: flex-end; height: 48px; overflow: hidden; background: #fff; padding-left: 1px; }
.history p { flex: none; height: 15px; line-height: 16px; }
.prompt { height: 19px; border-top: 1px solid #b4bdd8; background: #fff; font-weight: bold; line-height: 17px; padding-left: 1px; letter-spacing: -.65px; }

.toolbars { flex: none; height: 97px; border-top: 1px solid #d2d6e4; padding: 4px 0 0 6px; }
.tabs { display: grid; grid-template-columns: 69px 63px 64px 59px 52px 107px 66px 75px 83px 91px 80px; height: 17px; border-bottom: 1px solid #c9cfdf; }
.tab { position: relative; z-index: 0; padding-left: 11px; line-height: 17px; white-space: nowrap; }
.tab::before, .tab::after { content: ""; position: absolute; z-index: -2; inset: 0 -3px 0 -3px; background: #bcc5d8; clip-path: polygon(0 100%, 9px 1px, 11px 0, calc(100% - 4px) 0, calc(100% - 1px) 3px, 100% 100%); }
.tab::after { z-index: -1; inset: 1px -2px 0 -2px; background: #d9d9d9; }
.tab.on::after { background: #ebecf0; bottom: -1px; }
.tab.on::before, .tab.on::after { left: 0; right: 0; }
.icons { display: flex; height: 35px; padding-top: 1px; border-bottom: 1px solid #d2d6e4; }
.icons svg { width: 28px; height: 28px; flex: none; }
.icons i { width: 1px; height: 26px; margin: 0 3px 0 2px; background: #bbb; flex: none; }
.icons.second { padding: 3px 0 0 1px; border: 0; }

.work { display: flex; flex: none; height: 483px; }
.palette { display: grid; grid-template-columns: 28px 28px; grid-auto-rows: 28px; width: 65px; padding: 8px 0 0 1px; background: linear-gradient(#d0d5e2, #d0d5e2) 3px 4px / 55px 1px no-repeat, linear-gradient(#d0d5e2, #d0d5e2) 3px 6px / 55px 1px no-repeat; }
.palette svg { width: 28px; height: 28px; }
.viewport { position: relative; flex: 1; overflow: hidden; background: #9da4ac; }
.viewport::after { content: ""; position: absolute; inset: 0 0 auto; height: 1px; background: #b4bdd8; }
.scene { width: 1302px; height: 483px; margin-left: -1px; }
.pts circle { fill: #fff; stroke: #222; stroke-width: 4px; }
.vp-title { position: absolute; left: 0; top: 1px; display: flex; align-items: center; width: 47px; height: 18px; padding-left: 7px; background: #8ba2bf; line-height: 17px; }
.vp-title b { width: 29px; height: 18px; font-size: 12.5px; letter-spacing: 0; }
.vp-title span { height: 15px; border-left: 1px solid #000; }
.vp-title span::after { content: ""; display: block; margin: 6px 0 0 1px; border: 4px solid transparent; border-top-color: #000; }

.vp-tabs { display: grid; grid-template-columns: 75px 35px 43px 43px 26px; flex: none; height: 20px; margin: 2px 0 0 64px; }
.vt { position: relative; z-index: 0; height: 19px; padding-left: 10px; line-height: 19px; }
.vt::before, .vt::after { content: ""; position: absolute; z-index: -2; inset: 0 -1px 0 0; background: #bcc5d8; clip-path: polygon(0 0, 100% 0, 100% calc(100% - 3px), calc(100% - 2px) 100%, 12px 100%, 8px calc(100% - 3px)); }
.vt::after { z-index: -1; inset: 0 0 1px 1px; background: #d9d9d9; }
.vt.on::after { background: #ebecf0; }
.vt svg { width: 10px; height: 10px; margin-top: 4px; }
.osnap { display: grid; grid-template-columns: 43px 48px 51px 44px 44px 37px 47px 43px 52px 48px 56px 68px auto; flex: none; height: 30px; padding: 1px 0 0 9px; align-items: center; }
.osnap label { display: flex; align-items: center; gap: 3px; }
.osnap label::before { content: ""; width: 13px; height: 13px; border: 1px solid #333; background: #fff; }
.osnap .c::before { content: "✓"; color: #333; font: 12px/11px "DejaVu Sans", sans-serif; text-indent: .5px; letter-spacing: 0; }
.osnap .d::before { width: 12px; height: 12px; border-color: #b0b0b0; background: #ddd; }
.status { display: grid; grid-template-columns: 50px 88px 88px 88px 88px 168px 65px 45px 47px 48px 74px 59px 92px 40px 1fr; height: 18px; border-top: 1px solid #b9c3dc; flex: 1; }
.status span { border-right: 1px solid #b9c3dc; text-align: center; line-height: 19px; white-space: nowrap; }
.status .hot { background: #e3f2fb; font-weight: bold; }
.status .layer { display: flex; gap: 2px; text-align: left; padding-left: 3px; }
.status .layer::before { content: ""; width: 14px; height: 14px; margin-top: 3px; background: #000; }
.status .last { text-align: left; padding-left: 1px; }

.caption { position: absolute; left: 398px; top: 227px; width: 238px; height: 41px; background: #000; color: #fff; font-size: 30px; line-height: 43px; letter-spacing: .15px; padding-left: 8px; white-space: nowrap; }

.gh { position: absolute; left: 785px; top: 0; width: 581px; height: 761px; display: flex; flex-direction: column; background: #f0f0f0; border-left: 1px solid #777; box-shadow: 0 3px 14px rgba(0,0,0,.4); }
.gh-title { height: 12px; background: #fff; color: #999; padding-left: 8px; overflow: hidden; line-height: 0; flex: none; }
.gh-menu { display: grid; grid-template-columns: 37px 39px 44px 57px 63px auto; height: 27px; padding-left: 12px; background: #f3f3f3; line-height: 28px; flex: none; }
.gh-tabs { display: grid; grid-template-columns: 44px 199px 56px 43px 61px 67px 54px auto; height: 22px; border-bottom: 1px solid #999; color: #6f6f6f; flex: none; font: 12px/24px "Liberation Sans", sans-serif; letter-spacing: -.4px; }
.gh-tabs .on { padding-left: 6px; height: 22px; line-height: 19px; border: 1px solid #999; border-bottom: 0; border-radius: 6px 0 0 0; background: linear-gradient(#fff, #ddd); color: #222; }
.ribbon { display: flex; gap: 4px; height: 87px; padding: 3px 2px; background: linear-gradient(#d8d8d8, #f0f0f0 85%); flex: none; }
.group { display: flex; flex-direction: column; height: 73px; border: 1px solid #777; border-radius: 4px; background: linear-gradient(#d6d6d6, #eee); overflow: hidden; }
.group.wide { width: 257px; }
.group.wide + .group { margin-left: -1px; }
.cells { display: flex; height: 58px; padding: 3px 3px 0; flex: none; }
.cells i { width: 1px; height: 50px; margin: 0 7px 0 6px; background: #bbb; }
.cells .col { display: flex; flex-direction: column; gap: 4px; width: 24px; }
.cells .col svg { width: 24px; height: 24px; }
.cells .pair { margin-left: 4px; }
.cells .end { margin-left: auto; }
.serif { font-family: "Liberation Serif", serif; }
.cap { position: relative; flex: 1; background: linear-gradient(#333, #111); color: #fff; text-align: center; font: 11px/13px "Liberation Sans", sans-serif; letter-spacing: 0; padding-right: 8px; }
.wide .cap { text-align: right; padding-right: 16px; }
.cap b { position: absolute; right: 2px; top: 0; font-size: 12px; color: #bbb; }
.gh-tools { display: flex; align-items: center; height: 33px; border-top: 1px solid #777; background: linear-gradient(#fff, #eee); flex: none; }
.gh-tools svg { width: 24px; height: 24px; }
.gh-tools .file { margin-left: 3px; }
.gh-tools .save { margin-left: 7px; }
.gh-tools u { border: 3px solid transparent; border-top-color: #000; margin-top: 3px; }
.gh-tools .save + u { margin-left: 181px; }
.gh-tools .eye { margin: 0 5px 0 7px; }
.gh-tools .pen { margin-left: 6px; }
.gh-canvas { height: 557px; padding-top: 528px; border-left: 1px solid #777; background: repeating-linear-gradient(90deg, transparent 0 140px, #bcb8b1 140px 141px, transparent 141px 150px), repeating-linear-gradient(transparent 0 31px, #bcb8b1 31px 32px, transparent 32px 50px), #d4d0c8; flex: none; }
.wid { width: 7px; height: 28px; border: 1px solid #000; border-left: 0; background: linear-gradient(#ccc 35%, #777 40%); }
.gh-status { flex: 1; border-top: 1px solid #fff; line-height: 24px; padding-left: 6px; letter-spacing: 0; }

.popup { position: absolute; left: 825px; top: 36px; width: 200px; height: 334px; border: 1px solid #000; background: #f0f0f0; }
.item { display: flex; align-items: center; gap: 8px; height: 26px; padding: 0 0 2px 4px; color: #858585; font: 11.4px/24px "Liberation Sans", sans-serif; letter-spacing: -.2px; }
.item:first-child { height: 25px; }
.item svg { width: 24px; height: 24px; flex: none; transform: translate(1px, 1px) scale(1.08); }
.item.sel { border-top: 1px solid #999; background: linear-gradient(90deg, #cfcfcf, #f0f0f0 90%); color: #000; }
.item.sel svg { transform: none; }
.query { height: 22px; margin: 0 -1px; border: 1px solid #666; background: #fff; text-align: center; font: 13px/19px "Liberation Sans", sans-serif; letter-spacing: .3px; }
.frame { position: absolute; left: 733px; top: 293px; width: 355px; height: 122px; border: 8px solid #ed1c24; }
```
